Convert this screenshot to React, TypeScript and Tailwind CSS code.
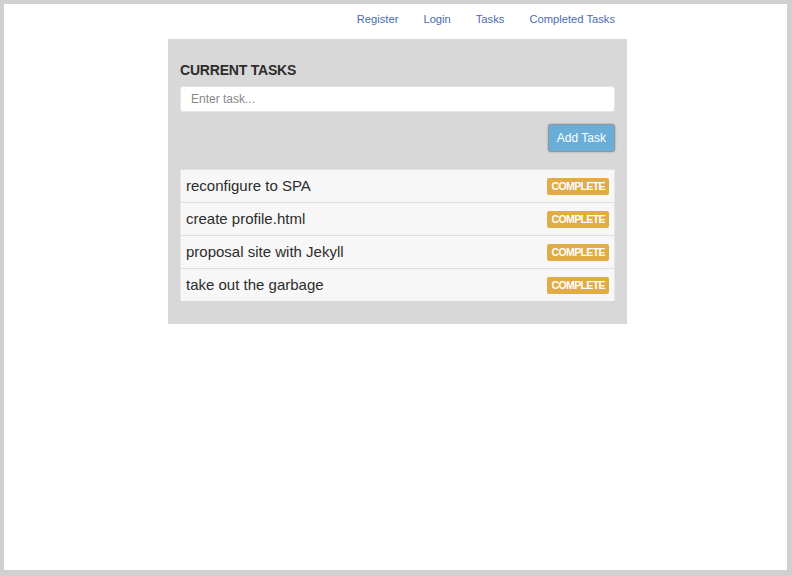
const tasks = [
  "reconfigure to SPA",
  "create profile.html",
  "proposal site with Jekyll",
  "take out the garbage",
];

const navLinks = ["Register", "Login", "Tasks", "Completed Tasks"];

export default function App() {
  return (
    <div
      className="h-[576px] w-[792px] border-t-[4px] border-l-[4px] border-r-[5px] border-b-[6px] border-[#d0d0d0] bg-white text-[#333]"
      style={{ fontFamily: '"Liberation Sans", Arial, sans-serif' }}
    >
      <div className="ml-[164px] w-[459px]">
        <nav className="flex h-[35px] items-center justify-end gap-[25px] px-3 pb-[4px] text-[11.2px] text-[#4a6cb3]">
          {navLinks.map((link) => (
            <a key={link} href="#" className="hover:underline">
              {link}
            </a>
          ))}
        </nav>

        <section className="bg-[#d8d8d8] px-3 pt-[19px] pb-[23px]">
          <h2 className="text-[14px] font-semibold uppercase leading-[24px] tracking-[-0.2px] text-[#2d2d2d]">
            Current Tasks
          </h2>
          <input
            type="text"
            placeholder="Enter task..."
            className="mt-[4px] h-[26px] w-full rounded-[3px] border border-[#e6e6e6] bg-white px-[10px] text-[12px] placeholder:text-[#888] focus:outline-none"
          />
          <div className="mt-[12px] flex justify-end">
            <button className="h-[28px] rounded-[3px] border border-[#8b98a2] bg-[#6aaed8] px-[8px] text-[12px] text-white shadow-[0_0_2px_rgba(0,0,0,0.35)]">
              Add Task
            </button>
          </div>
          <ul className="mt-[17px] border-x border-[#e6e6e6] bg-[#f7f7f7]">
            {tasks.map((task) => (
              <li
                key={task}
                className="flex h-[33px] items-center justify-between border-t border-[#e0e0e0] pl-[5px] pr-[5px]"
              >
                <span className="text-[15px] text-[#2d2d2d]">{task}</span>
                <button className="h-[17px] rounded-[2px] bg-[#e1ab45] px-[4px] text-[10.5px] font-bold uppercase leading-none tracking-[-0.6px] text-white">
                  Complete
                </button>
              </li>
            ))}
          </ul>
        </section>
      </div>
    </div>
  );
}
